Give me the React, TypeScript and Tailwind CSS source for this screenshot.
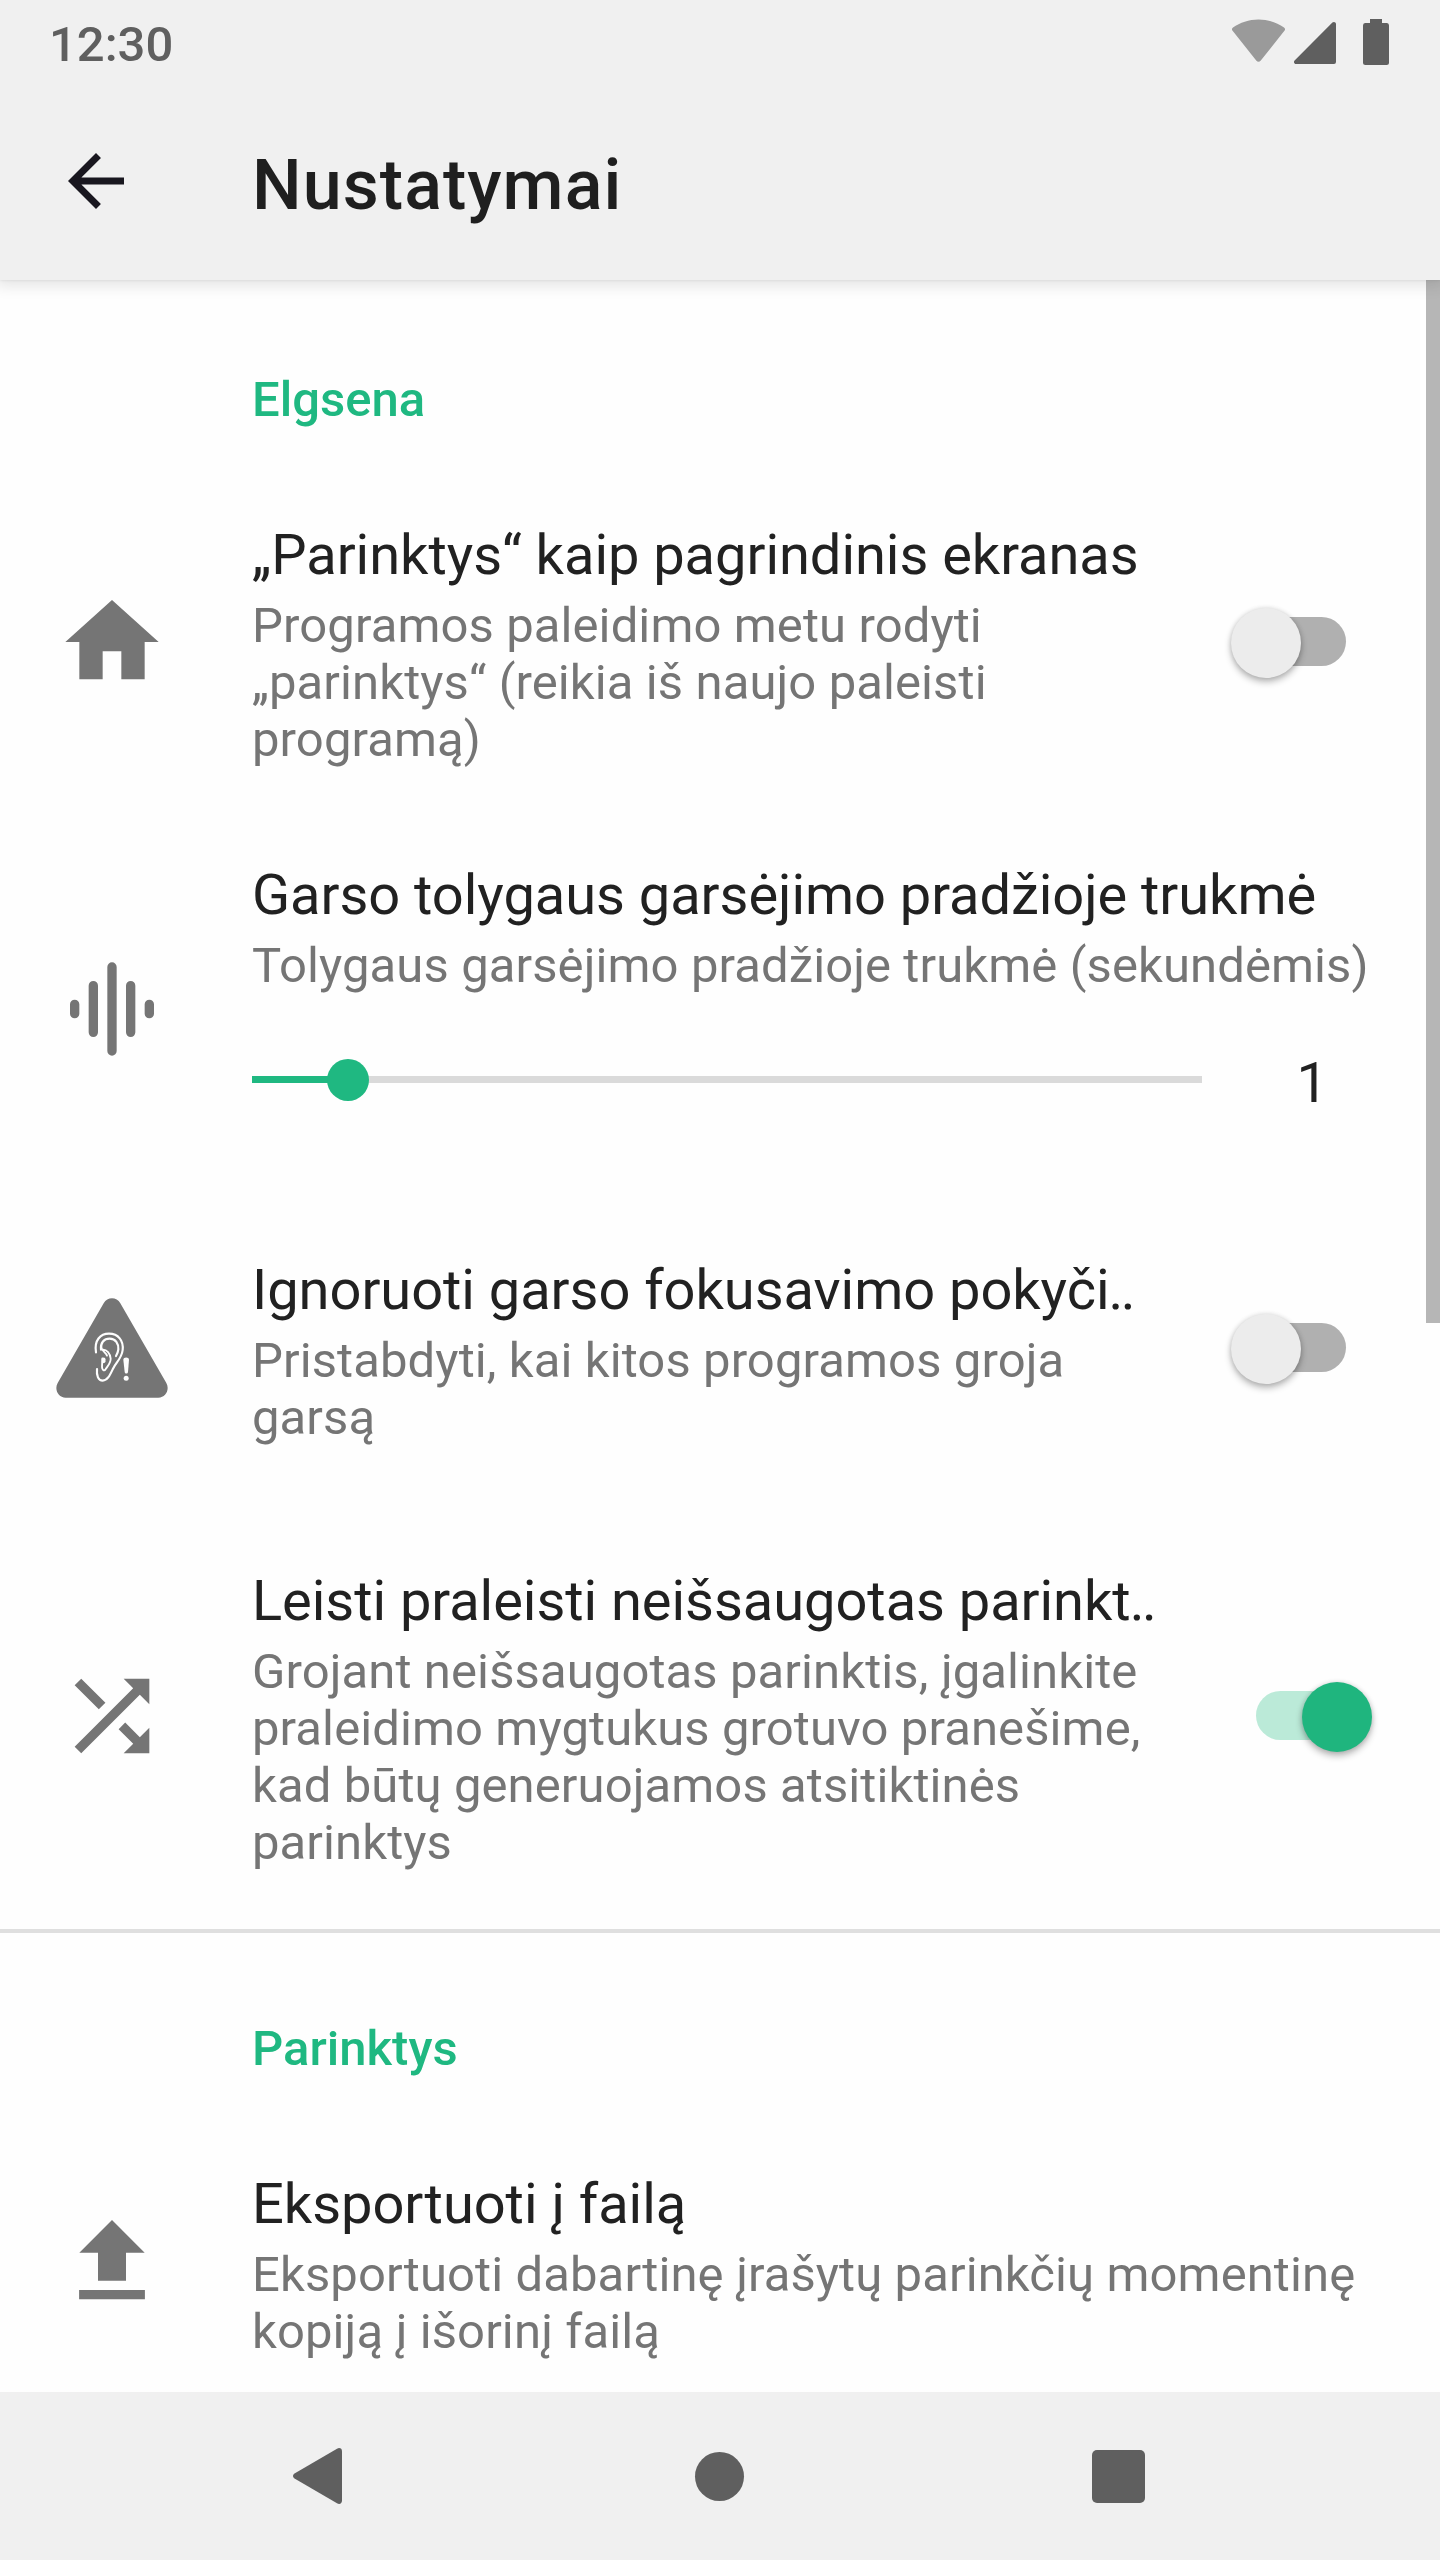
import type { ReactNode } from "react";

function StatusBar() {
  return (
    <div className="flex h-[84px] items-start justify-between pr-[51px] pl-[49px] text-[#5f5f5f]">
      <span className="pt-[16px] text-[49px] leading-[57px] font-medium">12:30</span>
      <div className="flex pt-[19px]">
        <svg className="h-[46px] w-[53px]" viewBox="0 0 53 46" fill="#9a9a9a">
          <path d="M1 8.5C8 3.500 17 .500 26.500 .500S45 3.500 52 8.500C53.200 9.400 53.400 10.600 52.600 11.600L28.600 41.800C27.500 43.200 25.500 43.200 24.400 41.800L.400 11.600C-.400 10.600-.200 9.400 1 8.500Z" />
        </svg>
        <svg className="ml-[9px] h-[46px] w-[42px]" viewBox="0 0 42 46" fill="currentColor">
          <path d="M38.400 3.600C39.700 2.400 42 3.200 42 5V43Q42 45 40 45H2C0 45-.700 42.700 .600 41.400Z" />
        </svg>
        <svg className="ml-[27px] h-[46px] w-[26px]" viewBox="0 0 26 46" fill="currentColor">
          <path d="M7 0H19V4H24Q26 4 26 6.500V43.500Q26 46 23.500 46H2.500Q0 46 0 43.500V6.500Q0 4 2 4H7Z" />
        </svg>
      </div>
    </div>
  );
}

function AppBar() {
  return (
    <div className="flex h-[196px] items-start">
      <svg className="mt-[54.500px] ml-[53.500px] size-[84px]" viewBox="0 0 24 24" fill="#19171f">
        <path d="M20 11H7.830l5.590-5.590L12 4l-8 8 8 8 1.410-1.410L7.830 13H20v-2z" />
      </svg>
      <h1 className="mt-[60px] ml-[114.500px] text-[70px] leading-[82px] font-medium tracking-[1.050px] text-[#1f1f1f]">
        Nustatymai
      </h1>
    </div>
  );
}

function Toggle({ on = false }: { on?: boolean }) {
  return (
    <div className={"relative mb-px h-[49px] w-[90px] rounded-full " + (on ? "bg-[#bbead8]" : "bg-[#b0b0b0]")}>
      <span
        className={
          "absolute top-[-9px] size-[70px] rounded-full shadow-[0_4px_7px_rgba(0,0,0,0.28),0_0_5px_rgba(0,0,0,0.12)] " +
          (on ? "left-[45.500px] bg-[#1fb57e]" : "left-[-25.500px] bg-[#ececec]")
        }
      />
    </div>
  );
}

type RowProps = {
  icon: ReactNode;
  title: string;
  clipped?: boolean;
  lines: string[];
  height: string;
  top: string;
  toggle?: ReactNode;
  children?: ReactNode;
};

function Row({ icon, title, clipped = false, lines, height, top, toggle, children }: RowProps) {
  return (
    <div className={"flex shrink-0 items-center pr-[94px] pl-[56px] " + height}>
      <div className="size-[112px] shrink-0 text-[#757575]">{icon}</div>
      <div className={"ml-[84px] w-0 grow self-start whitespace-nowrap " + top}>
        <h3 className="text-[56px] leading-[66px] tracking-[-0.040px] text-[#212121]">
          {title}
          {clipped && <span className="ml-[-1px] tracking-[-2.500px]">..</span>}
        </h3>
        <p className="mt-[9px] text-[49px] leading-[57px] tracking-[0.100px] text-[#757575]">
          {lines.map((l) => (
            <span key={l} className="block">
              {l}
            </span>
          ))}
        </p>
        {children}
      </div>
      {toggle}
    </div>
  );
}

function Category({ top, children }: { top: string; children: ReactNode }) {
  return (
    <h2 className={"h-[178px] shrink-0 pl-[252px] text-[49px] leading-[57px] font-medium text-[#1fb881] " + top}>
      {children}
    </h2>
  );
}

const HomeIcon = () => (
  <svg className="size-full" viewBox="0 0 24 24" fill="currentColor">
    <path d="M10 20v-6h4v6h5v-8h3L12 3 2 12h3v8z" />
  </svg>
);

const WaveIcon = () => (
  <svg className="size-full" viewBox="0 0 24 24" stroke="currentColor" strokeWidth="2" strokeLinecap="round">
    <path d="M4 11v2M8 7v10M12 3v18M16 7v10M20 11v2" />
  </svg>
);

const EarIcon = () => (
  <svg className="size-full" viewBox="78 65 336 336" fill="none">
    <path
      fill="currentColor"
      d="M221 99C232 79 260 79 271 99L409 338C420 358 407 382 385 382H107C85 382 72 358 83 338Z"
    />
    <g stroke="#fefefe" strokeLinecap="round" strokeLinejoin="round" strokeWidth="6.500">
      <path d="M198 246C192 210 211 190 237 190C265 190 281 211 278 239C275 264 259 275 249 295C240 314 233 330 218 331C205 331 199 316 201 296" />
      <path d="M213 238C211 217 222 205 239 205C257 205 266 220 265 237C264 246 261 252 258 257" />
      <path
        d="M214 232C217 244 228 246 231 256M218 238C230 237 241 250 242 265C242 280 231 289 226 298C222 303 216 298 216 290L217 264"
        strokeWidth="5.500"
      />
      <path d="M221 267V273" strokeWidth="11" />
    </g>
    <path fill="#fefefe" d="M280 268C280 259 297 259 297 268L294 305C293 311 285 311 284 305Z" />
    <circle cx="288.500" cy="323.500" r="7.500" fill="#fefefe" />
  </svg>
);

const ShuffleIcon = () => (
  <svg className="size-full" viewBox="0 0 24 24" fill="currentColor">
    <path d="M10.590 9.170L5.410 4 4 5.410l5.170 5.170 1.420-1.410zM14.500 4l2.040 2.040L4 18.590 5.410 20 17.960 7.460 20 9.500V4h-5.500zm.330 9.410l-1.410 1.410 3.130 3.130L14.500 20H20v-5.500l-2.040 2.040-3.130-3.130z" />
  </svg>
);

const UploadIcon = () => (
  <svg className="size-full" viewBox="0 0 24 24" fill="currentColor">
    <path d="M9 16h6v-6h4l-7-7-7 7h4zM4.950 18H19.050v2H4.950z" />
  </svg>
);

function FadeSlider() {
  return (
    <div className="mt-[56px] flex h-[66px] items-center">
      <div className="relative mb-[7px] flex h-[7px] w-[950px] shrink-0 bg-[#dadada]">
        <div className="w-[95px] bg-[#1fb881]" />
        <span className="absolute top-[-17px] left-[74.500px] size-[42px] rounded-full bg-[#1fb881]" />
      </div>
      <span className="ml-[94.500px] text-[56px] leading-[66px] text-[#212121]">1</span>
    </div>
  );
}

function NavBar() {
  return (
    <nav className="flex h-[168px] shrink-0 items-center bg-[#f0f0f0] pl-[293px] text-[#5f5f5f]">
      <svg className="h-[56px] w-[49px]" viewBox="0 0 49 56" fill="currentColor">
        <path d="M1.500 25.500L44 .700C46.500-.700 49 .500 49 3.200V52.800C49 55.500 46.500 56.700 44 55.300L1.500 30.500C-.500 29.200-.500 26.800 1.500 25.500Z" />
      </svg>
      <div className="ml-[353px] size-[49px] rounded-full bg-current" />
      <div className="ml-[347.500px] size-[53px] rounded-[5px] bg-current" />
    </nav>
  );
}

export default function App() {
  return (
    <div className="relative flex h-[2560px] w-[1440px] flex-col overflow-hidden bg-[#fefefe] font-[Roboto,sans-serif]">
      <header className="relative z-10 h-[280px] shrink-0 bg-[#f0f0f0] shadow-[0_2px_14px_4px_rgba(0,0,0,0.1),0_0_3px_rgba(0,0,0,0.1)]">
        <StatusBar />
        <AppBar />
      </header>
      <main className="flex min-h-0 grow flex-col overflow-hidden">
        <Category top="pt-[91px]">Elgsena</Category>
        <Row
          icon={<HomeIcon />}
          height="h-[368px]"
          top="mt-[64px]"
          title="„Parinktys“ kaip pagrindinis ekranas"
          lines={["Programos paleidimo metu rodyti", "„parinktys“ (reikia iš naujo paleisti", "programą)"]}
          toggle={<Toggle />}
        />
        <Row
          icon={<WaveIcon />}
          height="h-[366px]"
          top="mt-[36px]"
          title="Garso tolygaus garsėjimo pradžioje trukmė"
          lines={["Tolygaus garsėjimo pradžioje trukmė (sekundėmis)"]}
        >
          <FadeSlider />
        </Row>
        <Row
          icon={<EarIcon />}
          height="h-[311px]"
          top="mt-[65px]"
          title="Ignoruoti garso fokusavimo pokyči"
          clipped
          lines={["Pristabdyti, kai kitos programos groja", "garsą"]}
          toggle={<Toggle />}
        />
        <Row
          icon={<ShuffleIcon />}
          height="h-[426px]"
          top="mt-[65px]"
          title="Leisti praleisti neišsaugotas parinkt"
          clipped
          lines={[
            "Grojant neišsaugotas parinktis, įgalinkite",
            "praleidimo mygtukus grotuvo pranešime,",
            "kad būtų generuojamos atsitiktinės",
            "parinktys",
          ]}
          toggle={<Toggle on />}
        />
        <div className="h-[4px] shrink-0 bg-[#dfdfdf]" />
        <Category top="pt-[87px]">Parinktys</Category>
        <Row
          icon={<UploadIcon />}
          height="h-[302px]"
          top="mt-[60px]"
          title="Eksportuoti į failą"
          lines={["Eksportuoti dabartinę įrašytų parinkčių momentinę", "kopiją į išorinį failą"]}
        />
      </main>
      <NavBar />
      <div className="absolute top-[280px] right-0 h-[1043px] w-[14px] bg-[#b6b6b6]" />
    </div>
  );
}
